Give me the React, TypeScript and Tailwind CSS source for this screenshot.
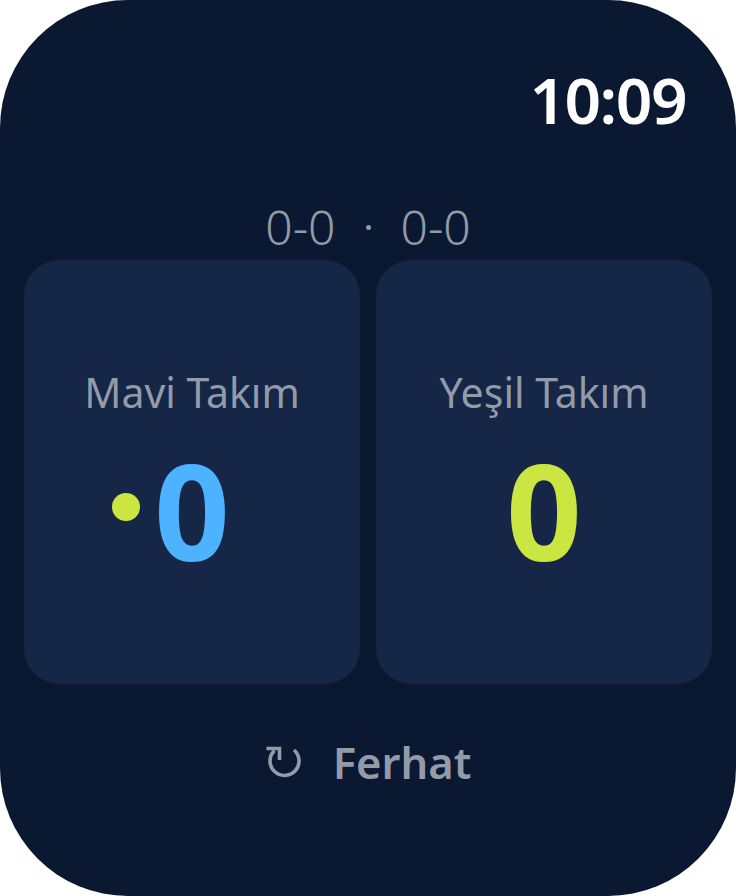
import React from 'react';

const teams = [
  { name: 'Mavi Takım', color: 'text-[#4db2ff]', serving: true },
  { name: 'Yeşil Takım', color: 'text-[#cbe641]', serving: false },
];

export default function App() {
  return (
    <div className="w-[736px] h-[896px] bg-white">
      <div className="w-full h-full rounded-[128px] bg-[#0a1931] flex flex-col px-6 font-['Noto_Sans',sans-serif]">
        {/* Clock */}
        <div className="flex justify-end pt-[60px] pr-[26px]">
          <span className="text-[64px] leading-[80px] font-semibold text-white tracking-[-1.5px]">10:09</span>
        </div>

        {/* Set scores */}
        <div className="flex justify-center items-center gap-[30px] mt-[68px] mb-[14px] h-[38px] text-[#939aa8] text-[48px] leading-[38px] font-light">
          <span>0-0</span>
          <span className="w-[5px] h-[5px] rounded-full bg-[#939aa8]"></span>
          <span>0-0</span>
        </div>

        {/* Team cards */}
        <div className="flex gap-4 h-[424px]">
          {teams.map((team) => (
            <div key={team.name} className="flex-1 rounded-[36px] bg-[#152647] flex flex-col items-center pt-[107px]">
              <span className="text-[41px] leading-[50px] text-[#939aa8]">{team.name}</span>
              <div className="relative mt-[27px] h-[132px] flex items-center">
                {team.serving && (
                  <span className="absolute left-[-42px] top-[49px] w-[28px] h-[28px] rounded-full bg-[#cbe641]"></span>
                )}
                <span className={`text-[132px] leading-[132px] font-bold ${team.color}`}>0</span>
              </div>
            </div>
          ))}
        </div>

        {/* Server */}
        <div className="flex justify-center items-center gap-[30px] mt-[48px] text-[#939aa8]">
          <svg width="38" height="38" viewBox="0 0 38 38" fill="none" stroke="currentColor" strokeWidth="3.6">
            <path d="M9.5 7.5A14.5 14.5 0 1 0 29 7" />
            <path d="M1.5 5.5H14.5V17" />
          </svg>
          <span className="text-[43.5px] leading-[60px] font-semibold">Ferhat</span>
        </div>
      </div>
    </div>
  );
}
